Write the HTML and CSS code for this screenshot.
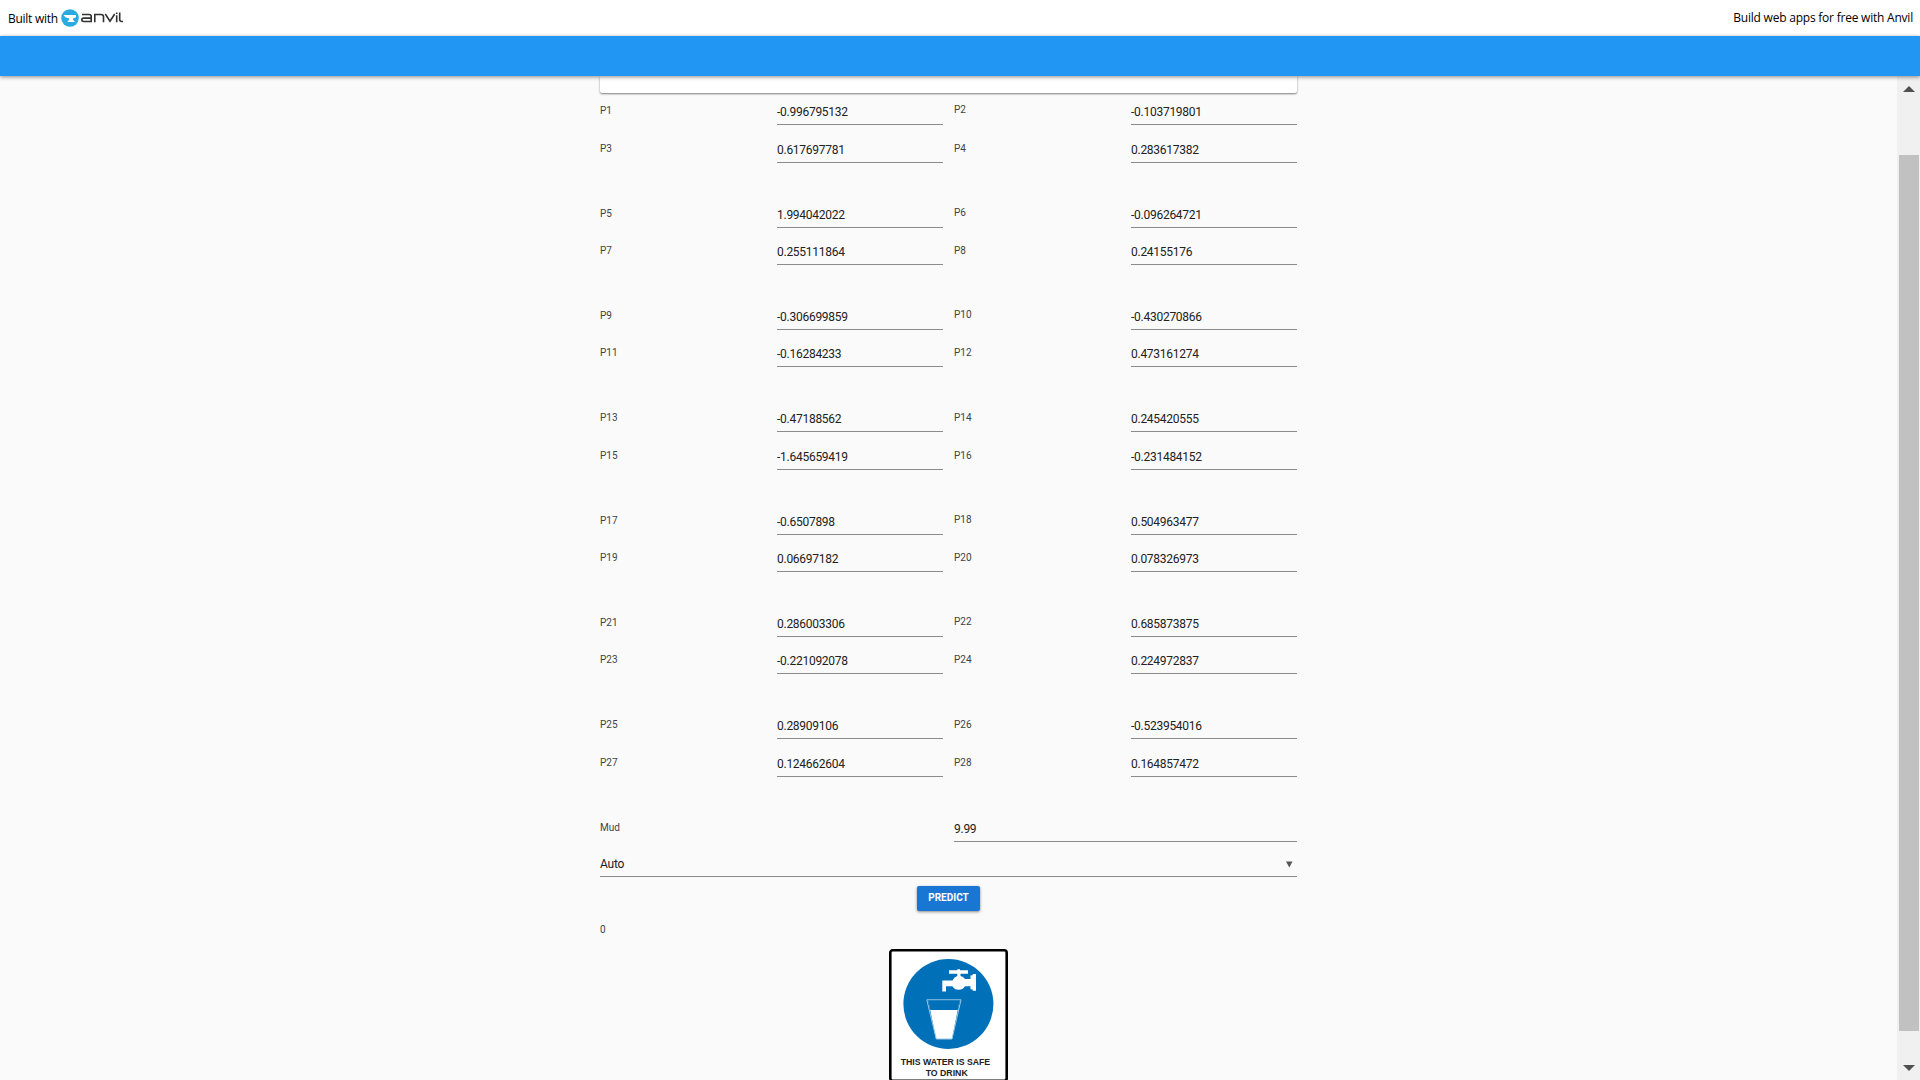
FILE: index.html
```html
<!DOCTYPE html>
<html lang="en">
<head>
<meta charset="utf-8">
<title>Water prediction</title>
<link rel="stylesheet" href="styles.css">
</head>
<body>
<header class="banner">
  <div class="built"><span>Built with</span>
    <svg class="logo" width="64" height="20" viewBox="0 0 64 20" aria-label="anvil">
      <circle cx="9" cy="10" r="8.800" fill="#29abe2"/>
      <path d="M2.500 7H15v2.300l-3 1.200v1.300l2 2.200H6.200l2-2.200v-1.300L4.300 9.300z" fill="#fff"/>
      <g fill="none" stroke="#333" stroke-width="1.600">
        <path d="M21 6.500h7q2.200 0 2.200 2v5h-7.500q-1.900 0-1.900-1.700t1.900-1.700h7.500"/>
        <path d="M33.800 14.300V6.500h6.200q2.500 0 2.500 2.300v5.500"/>
        <path d="M44.300 6l4.700 7.300L53.700 6"/>
        <path d="M55.700 7.300v7M55.700 4.500v1.500M58.700 4.500v7q0 2 2 2h1.300"/>
      </g>
    </svg>
  </div>
  <span class="promo">Build web apps for free with Anvil</span>
</header>
<div class="appbar"></div>
<div class="viewport">
  <main class="content">
    <div class="column">
      <div class="card"></div>
      <div id="fields"></div>
      <div class="row mud"><label>Mud</label><input value="9.99"></div>
      <div class="select"><span>Auto</span><svg width="7" height="7" viewBox="0 0 7 7"><path d="M0 .5h6.500L3.300 6.500z" fill="#555"/></svg></div>
      <button class="predict">PREDICT</button>
      <div class="result">0</div>
      <svg class="sign" width="119" height="133" viewBox="0 0 119 133">
        <rect x="1.300" y="1.300" width="116.400" height="130.400" rx="2.500" fill="#fff" stroke="#000" stroke-width="2.600"/>
        <circle cx="59.400" cy="55" r="45" fill="#0070b9"/>
        <g fill="#fff">
          <path d="M60 21.300h8.300v-1h2.700v1h8v3.500h-7.500v2.300q2.800.7 4.500 3h5.500v-3.600l2.200-.2v-1.300H87v16.700h-3.300v-1.300l-2.200-.2v-3H76q-2 3.600-6.300 3.600t-6.300-3.600H57v5.300h-3.700V31.500h10.200q1.700-3.700 4.800-4.400v-2.300H60z"/>
          <path d="M39.500 52h31L63 90H47z"/>
        </g>
        <path d="M37.800 50.800h34.200L63 90H47.300z" fill="none" stroke="#9cc9e6"/>
        <path d="M39.300 51.800h31.400l-2 9.200H41.300z" fill="#0070b9"/>
        <text x="11.700" y="116" textLength="89.500" lengthAdjust="spacingAndGlyphs">THIS WATER IS SAFE</text>
        <text x="36.700" y="127.300" textLength="42" lengthAdjust="spacingAndGlyphs">TO DRINK</text>
      </svg>
    </div>
  </main>
  <aside class="scrollbar"><i class="up"></i><i class="thumb"></i><i class="down"></i></aside>
</div>
<script src="fields.js"></script>
</body>
</html>
```
FILE: fields.js
```js
const values = [
  "-0.996795132", "-0.103719801", "0.617697781", "0.283617382",
  "1.994042022", "-0.096264721", "0.255111864", "0.24155176",
  "-0.306699859", "-0.430270866", "-0.16284233", "0.473161274",
  "-0.47188562", "0.245420555", "-1.645659419", "-0.231484152",
  "-0.6507898", "0.504963477", "0.06697182", "0.078326973",
  "0.286003306", "0.685873875", "-0.221092078", "0.224972837",
  "0.28909106", "-0.523954016", "0.124662604", "0.164857472"
];
const fields = document.getElementById("fields");
for (let i = 0; i < values.length; i += 2) {
  const group = Math.floor(i / 4);
  const row = document.createElement("div");
  row.className = "row " + (i % 4 ? "second" : "first");
  if (group % 3 === 0) row.classList.add("tall");
  if (group !== 3 && group !== 6) row.classList.add("raised");
  for (const n of [i, i + 1]) {
    row.insertAdjacentHTML("beforeend", `<label>P${n + 1}</label><input value="${values[n]}">`);
  }
  fields.append(row);
}
```
FILE: styles.css
```css
* { box-sizing: border-box; }
body { margin: 0; height: 1080px; overflow: hidden; display: flex; flex-direction: column; background: #fafafa; color: #212121; font-family: Roboto, sans-serif; font-size: 12px; }
.banner { height: 36px; flex: none; display: flex; justify-content: space-between; align-items: center; padding: 0 7px 0 8px; background: #fff; color: #000; font: 12px "Open Sans", sans-serif; letter-spacing: -.22px; }
.built { display: flex; align-items: center; gap: 3px; }
.built span { letter-spacing: -.28px; padding-top: 1px; }
.promo { padding-bottom: 1px; }
.logo { display: block; }
.appbar { height: 40px; flex: none; background: #2196f3; box-shadow: 0 1px 4px rgba(0,0,0,.45); position: relative; z-index: 1; }
.viewport { flex: 1; min-height: 0; display: flex; }
.content { flex: 1; overflow: hidden; }
.column { width: 697px; margin: 0 auto; display: flex; flex-direction: column; }
.card { height: 17px; background: #fff; border-radius: 0 0 2px 2px; box-shadow: 0 1px 2px rgba(0,0,0,.5); }
.row { display: grid; grid-template-columns: 166px 166px 166px 166px; column-gap: 11px; align-items: start; padding-top: 4px; }
.first { height: 37px; }
.first.tall { height: 38px; }
.second { height: 65px; }
label { font-size: 10px; line-height: 13px; padding-top: 7px; color: #424242; }
.first.raised label:nth-of-type(2) { padding-top: 6px; }
input { font: 12px/16px Roboto, sans-serif; letter-spacing: -.26px; color: #212121; width: 100%; height: 28px; margin: 0; padding: 3px 0 0; border: 0; border-bottom: 1px solid #8b8b8b; border-radius: 0; background: transparent; outline: 0; }
.mud { grid-template-columns: 343px 343px; height: 32px; }
.select { height: 35px; padding: 10px 4px 0 0; display: flex; justify-content: space-between; align-items: center; border-bottom: 1px solid #8b8b8b; letter-spacing: -.2px; }
.predict { align-self: center; width: 63px; height: 25px; margin-top: 9px; padding: 0 0 2px; border: 0; border-radius: 2px; background: #1976d2; color: #fff; font: 700 10px Roboto, sans-serif; box-shadow: 0 1px 3px rgba(0,0,0,.45); }
.result { font-size: 10px; line-height: 13px; margin-top: 12px; color: #424242; }
.sign { align-self: center; margin-top: 13px; flex: none; }
.sign text { font: 700 9.300px "Liberation Sans", sans-serif; fill: #222; }
.scrollbar { width: 23px; background: #f0f0f0; padding: 10px 1px 9px 2px; display: flex; flex-direction: column; align-items: center; }
.up, .down { width: 0; height: 0; border: 6px solid transparent; border-top: 0; border-bottom-color: #505050; }
.thumb { width: 20px; height: 876px; margin-top: 63px; background: #c1c1c1; }
.down { margin-top: auto; border-top: 6px solid #505050; border-bottom: 0; }
```
